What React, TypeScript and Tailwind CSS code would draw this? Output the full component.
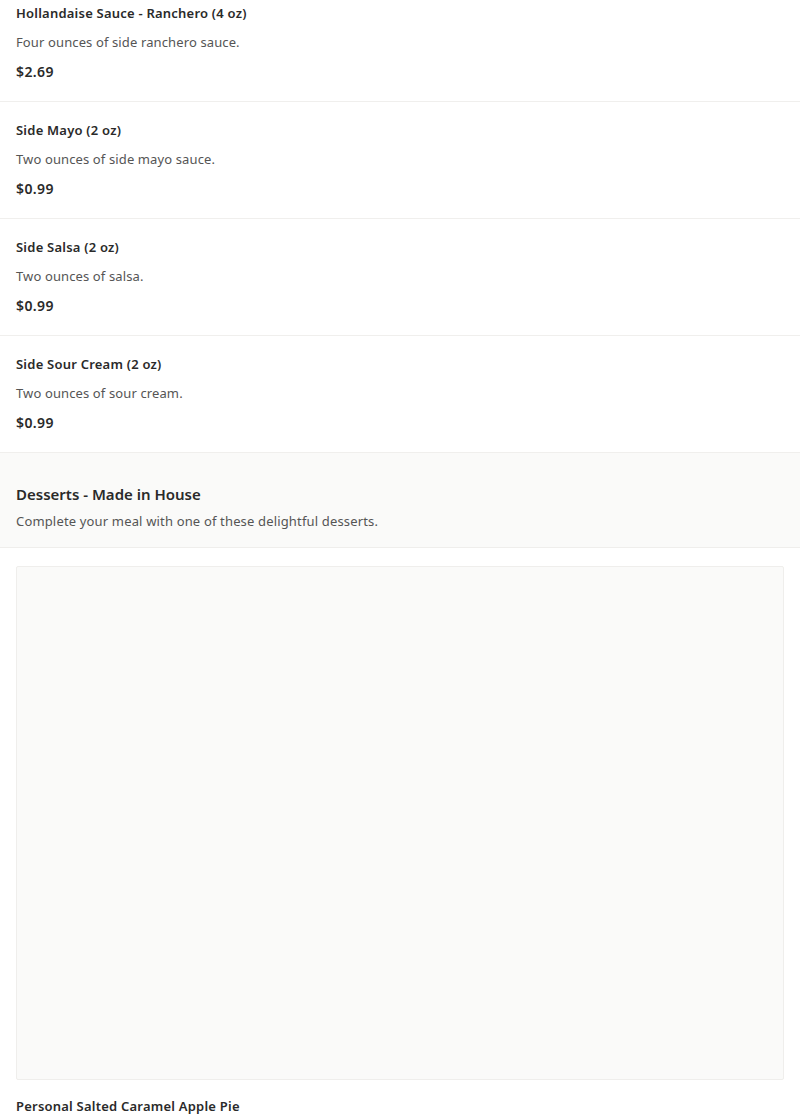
const sides = [
  { name: 'Hollandaise Sauce - Ranchero (4 oz)', desc: 'Four ounces of side ranchero sauce.', price: '$2.69' },
  { name: 'Side Mayo (2 oz)', desc: 'Two ounces of side mayo sauce.', price: '$0.99' },
  { name: 'Side Salsa (2 oz)', desc: 'Two ounces of salsa.', price: '$0.99' },
  { name: 'Side Sour Cream (2 oz)', desc: 'Two ounces of sour cream.', price: '$0.99' },
]

function MenuRow({ name, desc, price }: { name: string; desc: string; price: string }) {
  return (
    <div className="border-b border-[#f0efed] px-4 pt-[18px] pb-[20px] h-[117px]">
      <div className="text-[13px] leading-[20px] font-semibold tracking-[0.22px] text-[#2a2a2a]">{name}</div>
      <div className="mt-[9px] text-[13px] leading-[20px] tracking-[0.12px] text-[#555555]">{desc}</div>
      <div className="mt-[10px] text-[14px] leading-[20px] font-semibold tracking-[0.4px] text-[#2a2a2a]">{price}</div>
    </div>
  )
}

export default function App() {
  return (
    <div className="w-[800px] h-[1117px] overflow-hidden bg-white" style={{ fontFamily: '"Noto Sans", "Open Sans", sans-serif' }}>
      <div className="-mt-[15px]">
        {sides.map((s) => (
          <MenuRow key={s.name} {...s} />
        ))}
        <div className="bg-[#fafaf9] border-b border-[#efeeec] px-4 pt-[30px] pb-[16px]">
          <h2 className="text-[15px] leading-[22px] font-semibold text-[#2a2a2a]">Desserts - Made in House</h2>
          <p className="mt-[6px] text-[13px] leading-[20px] tracking-[0.16px] text-[#555555]">Complete your meal with one of these delightful desserts.</p>
        </div>
        <div className="px-4 pt-[18px]">
          <div className="h-[514px] rounded-[2px] border border-[#efeeec] bg-[#fafaf9]" />
          <div className="mt-[16px] text-[13px] leading-[20px] font-semibold tracking-[0.22px] text-[#2a2a2a]">Personal Salted Caramel Apple Pie</div>
        </div>
      </div>
    </div>
  )
}
